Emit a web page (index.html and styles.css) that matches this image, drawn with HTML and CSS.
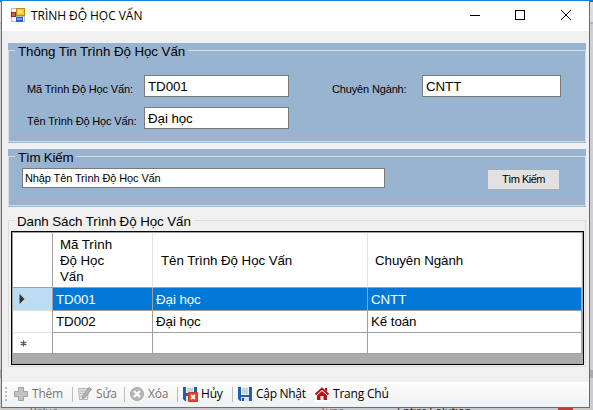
FILE: index.html
```html
<!DOCTYPE html>
<html lang="vi">
<head>
<meta charset="utf-8">
<title>TRÌNH ĐỘ HỌC VẤN</title>
<link rel="stylesheet" href="styles.css">
</head>
<body>
<div class="desktop">
<main class="window">
  <header class="titlebar">
    <svg class="app-icon" width="14" height="14" viewBox="0 0 14 14" shape-rendering="crispEdges">
      <path fill="#b9b9b9" d="M0 0h14v14H0z"/><path fill="#fff" d="M1 1h4v3H1zM1 9h4v4H1zM12 9h1v4h-1z"/>
      <path fill="#9c2720" d="M0 4h5v5H0z"/><path fill="#e05a45" d="M1 5h3v3H1z"/>
      <path fill="#b98b10" d="M5 0h9v8H5z"/><path fill="#fbc92f" d="M6 1h7v6H6z"/><path fill="#ffe58a" d="M7 2h4v3H7z"/>
      <path fill="#2f60b5" d="M5 9h7v5H5z"/><path fill="#6f9cf0" d="M6 10h5v2H6z"/>
    </svg>
    <h1 class="title">TRÌNH ĐỘ HỌC VẤN</h1>
    <svg class="controls" width="102" height="12" viewBox="0 0 102 12" fill="none" stroke="#000">
      <path d="M0 5.500h10M45.500 .5h9v9h-9z" shape-rendering="crispEdges"/><path d="M91 0l10 10M101 0L91 10"/>
    </svg>
  </header>

  <section class="group info">
    <div class="frame">
      <h2 class="legend">Thông Tin Trình Độ Học Vấn</h2>
      <div class="fields">
        <label class="label">Mã Trình Độ Học Vấn:</label><div class="input">TD001</div>
        <label class="label major">Chuyên Ngành:</label><div class="input">CNTT</div>
        <label class="label">Tên Trình Độ Học Vấn:</label><div class="input">Đại học</div>
      </div>
    </div>
  </section>

  <section class="group search">
    <div class="frame">
      <h2 class="legend">Tìm Kiếm</h2>
      <div class="search-row"><div class="input small">Nhập Tên Trình Độ Học Vấn</div><button class="button">Tìm Kiếm</button></div>
    </div>
  </section>

  <section class="group list">
    <div class="frame">
      <h2 class="legend">Danh Sách Trình Độ Học Vấn</h2>
      <div class="grid">
        <div class="row head"><div></div><div>Mã Trình<br>Độ Học<br>Vấn</div><div>Tên Trình Độ Học Vấn</div><div>Chuyên Ngành</div></div>
        <div class="row selected"><div><svg width="6" height="10" viewBox="0 0 6 10"><path d="M.5 0L5.500 5 .5 10z" fill="#333"/></svg></div><div>TD001</div><div>Đại học</div><div>CNTT</div></div>
        <div class="row"><div></div><div>TD002</div><div>Đại học</div><div>Kế toán</div></div>
        <div class="row new"><div><svg width="7" height="7" viewBox="0 0 7 7"><path d="M3.500 .5v6M.7 2l5.600 3M6.300 2L.7 5" stroke="#555" stroke-width="1.300"/></svg></div><div></div><div></div><div></div></div>
      </div>
    </div>
  </section>

  <footer class="toolbar">
    <svg class="grip" width="2" height="16" viewBox="0 0 2 16" shape-rendering="crispEdges"><path d="M0 0h2v2H0zM0 4h2v2H0zM0 8h2v2H0zM0 12h2v2H0z" fill="#bcbcbc"/></svg>
    <div class="tool them off">
      <svg width="14" height="14" viewBox="0 0 14 14"><path d="M4.500 .5h5v4h4v5h-4v4h-5v-4h-4v-5h4z" fill="#c2c2c2" stroke="#a2a2a2"/></svg><span>Thêm</span>
    </div>
    <div class="tool sua off">
      <svg width="14" height="14" viewBox="0 0 14 14"><path d="M.5 1.500h10l-1 11h-8z" fill="#e0e0e0" stroke="#b5b5b5"/><path d="M2 4h6M2 6.500h4M2 9h3" stroke="#bbb"/><path d="M11 .5l2.500 1.500-6 8-3 1.500.5-3z" fill="#b5b5b5" stroke="#999"/></svg><span>Sửa</span>
    </div>
    <div class="tool xoa off">
      <svg width="14" height="14" viewBox="0 0 14 14"><circle cx="7" cy="7" r="6.500" fill="#b5b5b5" stroke="#a8a8a8"/><path d="M4 4l6 6M10 4l-6 6" stroke="#fff" stroke-width="2.200"/></svg><span>Xóa</span>
    </div>
    <div class="tool huy">
      <svg width="15" height="15" viewBox="0 0 15 15"><path d="M0 0h14v14H2L0 12z" fill="#1f5fae"/><path d="M3 0h8v6H3z" fill="#eef3f8"/><path d="M4 2h6M4 4h6" stroke="#a5b5c5"/><path d="M3 9h4v5H3z" fill="#dce5ed"/><path d="M5.500 5.500h9v9h-9z" fill="#e2442b" stroke="#c83822"/><path d="M8 8l4 4M12 8l-4 4" stroke="#fff" stroke-width="1.800"/></svg><span>Hủy</span>
    </div>
    <div class="tool cap">
      <svg width="14" height="14" viewBox="0 0 14 14"><path d="M0 0h14v14H2L0 12z" fill="#1f5fae"/><path d="M3 0h8v8H3z" fill="#eef3f8"/><path d="M4 2h6M4 4h6M4 6h6" stroke="#a5b5c5"/><path d="M3 10h8v4H3z" fill="#dce5ed"/><path d="M4 11h2v3H4z" fill="#174a8d"/></svg><span>Cập Nhật</span>
    </div>
    <div class="tool home">
      <svg width="16" height="16" viewBox="0 0 16 16"><path fill="#fff" d="M0 0h16v16H0z"/><path d="M1.500 8.500L8 2.500l6.500 6" fill="none" stroke="#b90e16" stroke-width="1.800"/><path d="M11 2h2v4l-2-2zM3 9.500L8 5l5 4.500V14H9.500v-4h-3v4H3z" fill="#b90e16"/></svg><span>Trang Chủ</span>
    </div>
  </footer>
</main>
<div class="behind"><span class="b-value">Value</span><span class="b-type">Type</span><span class="b-sol">Entire Solution</span><i class="b-error"></i></div>
</div>
</body>
</html>
```

FILE: styles.css
```css
* { box-sizing: border-box; }
body { margin: 0; overflow: hidden; font-family: "Liberation Sans", sans-serif; font-size: 13.33px; letter-spacing: -.07px; color: #000; }
h1, h2 { margin: 0; font-size: inherit; font-weight: normal; }
svg { display: block; flex: none; }
.desktop { width: 593px; height: 410px; padding-left: 1px; background: linear-gradient(#1173c4 0 2px, #dcdce0 2px 22px, #b4b4ba 22px 24px, #cfcfd3 24px 370px, #a9a9b4 370px 378px, #cdcdd1 378px); overflow: hidden; }
.window { width: 589px; height: 408px; border: 1px solid #1883d7; background: #f0f0f0; display: flex; flex-direction: column; }
.titlebar { height: 30px; flex: none; background: #fff; display: flex; align-items: flex-start; padding: 7px 0 0 9px; }
.title { font: 12px/17px "Open Sans", sans-serif; margin: -1px 0 0 6px; white-space: nowrap; letter-spacing: -.05px; }
.controls { margin: 2px 17px 0 auto; }

.group { margin: 0 3px 0 6px; flex: none; background: #99b4d1; }
.info { margin-top: 12px; height: 100px; padding: 7px 0 1px; }
.search { margin-top: 6px; height: 58px; padding: 7px 0 1px; }
.list { margin-top: 13px; height: 147px; background: #f0f0f0; }
.frame { height: 100%; border: 1px solid #dcdcdc; }
.legend { width: max-content; height: 16px; margin: -8px 0 0 6px; padding: 1px 3px 0; line-height: 16px; background: #99b4d1; white-space: nowrap; }
.search .legend { letter-spacing: -.2px; }
.list .legend { background: #f0f0f0; padding: 1px 3px 0 2px; }
.fields { display: grid; grid-template-columns: 117px 145px 133px 139px; grid-template-rows: 22px 22px; row-gap: 10px; padding: 16px 0 0 18px; }
.label { font-size: 11px; line-height: 14px; padding-top: 7px; letter-spacing: -.15px; white-space: nowrap; }
.major { margin-left: 43px; }
.input { border: 1px solid #7a7a7a; background: #fff; padding: 1px 0 0 3px; line-height: 20px; white-space: nowrap; }
.search-row { display: flex; padding: 3px 25px 0 13px; justify-content: space-between; }
.small { width: 363px; height: 20px; font-size: 11px; line-height: 18px; padding: 0 0 0 2px; letter-spacing: -.12px; }
.button { width: 73px; height: 21px; margin-top: 1px; padding: 0; border: 1px solid #adadad; background: #e1e1e1; color: #000; font: 11px/19px "Liberation Sans", sans-serif; letter-spacing: -.5px; }

.grid { width: 573px; height: 134px; margin: 2px 0 0 2px; border: 1px solid #000; background: #ababab; padding: 1px 1px 0; box-shadow: inset 1px 1px #a0a0a0; }
.row { display: grid; grid-template-columns: 40px 100px 215px 214px; height: 22px; background: #fff; line-height: 21px; }
.row > div { border-right: 1px solid #a0a0a0; border-bottom: 1px solid #a0a0a0; padding: 1px 0 0 3px; white-space: nowrap; }
.row > div:first-child { display: flex; align-items: center; padding: 0 0 0 6px; border-bottom-color: #e3e3e3; }
.row.new > div:first-child { padding: 1px 0 0 7px; border-bottom-color: #a0a0a0; }
.row.head { height: 55px; line-height: 16px; }
.row.head > div { padding: 4px 0 0 7px; border-right-color: #e3e3e3; }
.row.head > div:first-child { border-right-color: #a0a0a0; border-bottom-color: #a0a0a0; }
.row.head > div:nth-child(n+3) { padding-top: 20px; }
.row.head > div:nth-child(3) { padding-left: 8px; }
.row.selected { background: #0078d7; color: #fff; }
.row.selected > div:first-child { background: #bcdcf4; }

.toolbar { height: 25px; margin-top: auto; background: linear-gradient(#fdfdfd, #f1f1f1); display: flex; align-items: flex-start; padding: 5px 0 0 3px; font: 12px/17px "Open Sans", sans-serif; letter-spacing: -.2px; }
.tool { display: flex; gap: 4px; height: 15px; white-space: nowrap; }
.tool span { margin-top: -2px; }
.tool.off { color: #767676; }
.them, .sua, .xoa, .huy { border-right: 1px solid #bdbdbd; }
.them { margin-left: 7px; width: 59px; }
.sua { margin-left: 5px; width: 47px; }
.xoa { margin-left: 5px; width: 48px; }
.huy { margin-left: 5px; width: 50px; gap: 3px; }
.cap { margin-left: 5px; width: 76px; letter-spacing: -.3px; }
.home svg { margin-top: -1px; }
.home { gap: 3px; }
.behind { height: 2px; overflow: hidden; display: flex; font: 11px/14px "Open Sans", sans-serif; color: #666; background: #c6c9cf; }
.behind span { margin-top: -4px; }
.b-value { margin-left: 29px; width: 290px; }
.b-type { width: 77px; }
.b-sol { color: #222; width: 161px; }
.b-error { width: 15px; background: #c33a30; }
```
